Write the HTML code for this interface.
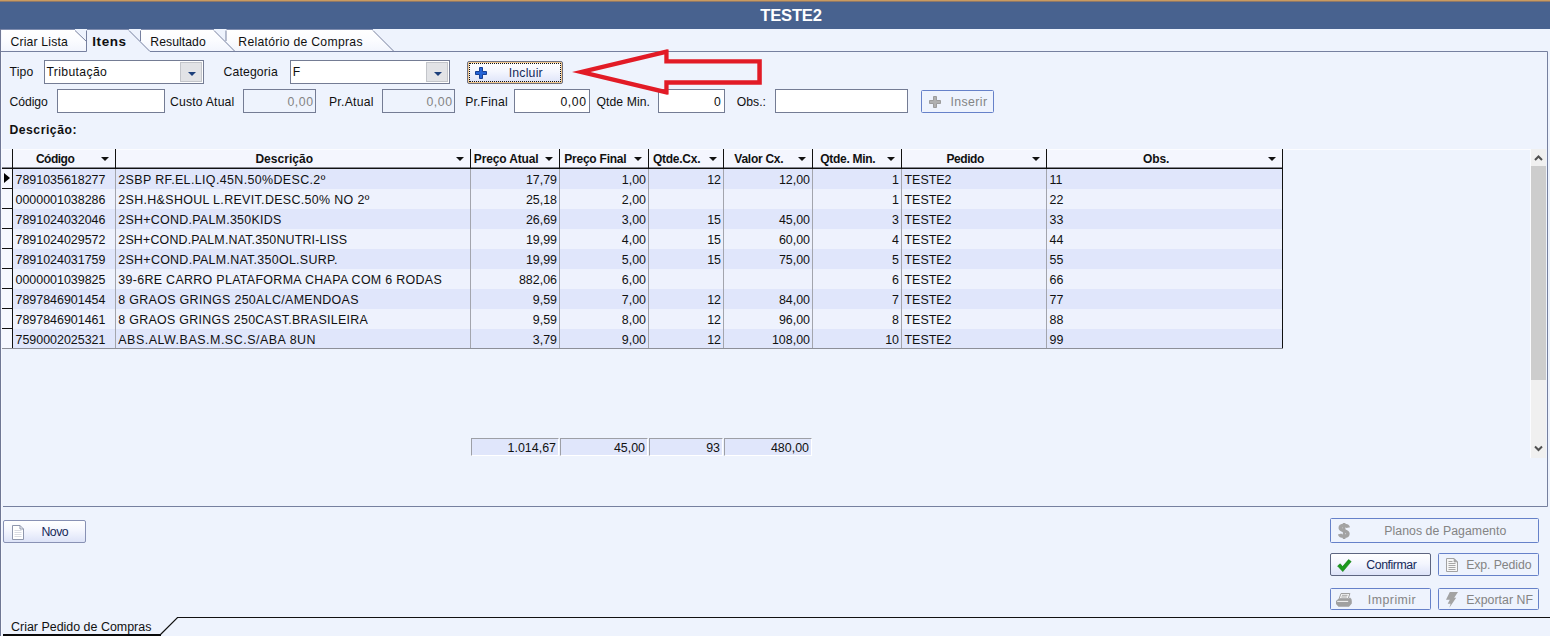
<!DOCTYPE html>
<html><head><meta charset="utf-8">
<style>
*{box-sizing:border-box;margin:0;padding:0}
html,body{width:1550px;height:636px;overflow:hidden;background:#eef3fd}
body{position:relative;font-family:"Liberation Sans",sans-serif;font-size:13px;color:#111}
.a{position:absolute}
.lbl{position:absolute;font-size:12.2px;line-height:16px;white-space:nowrap;color:#101010}
.bl{position:absolute;font-size:12.3px;line-height:16px;white-space:nowrap;color:#15295a}
.bg{position:absolute;font-size:12.3px;line-height:16px;white-space:nowrap;color:#848484}
.inp{position:absolute;background:#fff;border:1px solid #747c94}
.inp.dis{background:#eef3fd}
.cb{position:absolute;background:#fff;border:1px solid #747c94}
.cb i{position:absolute;right:1px;top:1px;width:22px;height:20px;background:#e2e3e6;border:1px solid #c3c5ca}
.cb i:after{content:"";position:absolute;left:6.5px;top:8.5px;border:4.2px solid transparent;border-top:4.6px solid #1c3f7a;border-bottom:0}
.btn{position:absolute;border:1px solid #8891b4;border-radius:2px;background:linear-gradient(#ffffff 0%,#f4f6fe 45%,#dde3f8 100%)}
.btn.dis{border-color:#6681c9;border-radius:1.5px;background:#eef3fd}
.hd{position:absolute;font-weight:bold;font-size:12px;line-height:16px;color:#111;white-space:nowrap}
.vl{position:absolute;top:149px;width:1px;height:19px;background:#111}
.ar{position:absolute;top:156.7px;width:0;height:0;border:4.2px solid transparent;border-top:4.5px solid #111;border-bottom:0}
.row{position:absolute;left:13px;width:1269px;height:20px}
.row.d{background:#e0e6fb}
.row.l{background:#eef2fd}
.c{position:absolute;font-size:12.45px;line-height:16px;white-space:nowrap;color:#111}
.gl{position:absolute;top:169px;width:1px;height:179px;background:#a3a5ad}
.ft{position:absolute;top:438px;height:18px;background:#e0e6fb;border-top:1px solid #9d9fa6;border-left:1px solid #9d9fa6;border-right:1px solid #fff;border-bottom:1px solid #fff}
</style></head><body>
<div class="a" style="left:0;top:0;width:1550px;height:1px;background:#c99a60"></div>
<div class="a" style="left:0;top:2px;width:1550px;height:27px;background:#48628f"></div>
<div class="a" style="left:0;top:1px;width:1550px;height:1px;background:#8f7868"></div>
<div id="title" class="lbl" style="left:760.2px;top:6px;letter-spacing:-0.184px;color:#fff;font-weight:bold;font-size:16.6px;line-height:20px">TESTE2</div>
<svg class="a" style="left:0;top:0" width="1550" height="636" viewBox="0 0 1550 636">
  <defs><linearGradient id="tg" x1="0" y1="0" x2="0" y2="1"><stop offset="0" stop-color="#ffffff"/><stop offset="0.5" stop-color="#fbfcff"/><stop offset="1" stop-color="#f2f5fd"/></linearGradient></defs>
  <polygon points="2,30 75,30 86.5,41 86.5,51 2,51" fill="url(#tg)"/>
  <polygon points="140.5,30 214,30 235,51.5 150,51.5 140.5,41" fill="url(#tg)"/>
  <polygon points="226,30 373,30 394,51.5 235,51.5 226,41" fill="url(#tg)"/>
  <rect x="0" y="29" width="1" height="607" fill="#6f7794"/>
  <rect x="1" y="29" width="1" height="607" fill="#f6f8ff"/>
  <g fill="none" stroke="#76809f" stroke-width="1">
    <path d="M1,51.5 H86.5"/>
    <path d="M150,51.5 H1547.5 V506.5 H3"/>
    <path d="M75,30.5 L86.5,41.5"/>
    <path d="M86.5,30.5 V51.5"/>
    <path d="M129,30.5 L150,51.5"/>
    <path d="M140.5,41 V30.5"/><path d="M214,30.5 L235,51.5"/>
    <path d="M226,41 V30.5"/><path d="M373,30.5 L394,51.5"/>
  </g>
  <path d="M1,29.5 H75 M87,29.5 H129 M141,29.5 H214 M226.5,29.5 H373" stroke="#7f8cae" stroke-width="1" fill="none"/>
  <path d="M1550,617.5 H177.5 L160,635" fill="none" stroke="#111" stroke-width="1.2"/>
  <rect x="3" y="634" width="158" height="2" fill="#0a0a0a"/>
</svg>
<div id="tb1" class="lbl" style="left:10.5px;top:34px;letter-spacing:0.175px;">Criar Lista</div>
<div id="tb2" class="lbl" style="left:92.3px;top:34px;letter-spacing:0.546px;font-weight:bold;font-size:13.5px">Itens</div>
<div id="tb3" class="lbl" style="left:150.3px;top:34px;letter-spacing:0.064px;">Resultado</div>
<div id="tb4" class="lbl" style="left:238.3px;top:34px;letter-spacing:0.298px;">Relatório de Compras</div>
<div id="l1" class="lbl" style="left:9.6px;top:64px;letter-spacing:0.145px;">Tipo</div>
<div class="cb" style="left:44px;top:60px;width:160px;height:24px"><i></i></div>
<div id="v1" class="lbl" style="left:46.5px;top:64px;letter-spacing:0.351px;">Tributação</div>
<div id="l2" class="lbl" style="left:223.5px;top:64px;letter-spacing:0.168px;">Categoria</div>
<div class="cb" style="left:290px;top:60px;width:160px;height:24px"><i></i></div>
<div id="v2" class="lbl" style="left:292.8px;top:64px;letter-spacing:-0.9px;">F</div>
<div class="btn" style="left:467px;top:61px;width:96px;height:23px;border-color:#6e7182;box-shadow:inset 0 0 0 1px #f2c88e">
  <div class="a" style="left:1px;top:1px;right:1px;bottom:1px;border:1px dotted #111"></div>
  <svg class="a" style="left:7px;top:5px" width="12" height="12" viewBox="0 0 12 12"><path d="M4.5,0.5h3v4h4v3h-4v4h-3v-4h-4v-3h4z" fill="#2463d6" stroke="#163f94" stroke-width="1"/></svg>
</div>
<div id="b1" class="bl" style="left:508.7px;top:64.5px;letter-spacing:0.198px;">Incluir</div>
<div id="l3" class="lbl" style="left:9.6px;top:93.5px;letter-spacing:-0.105px;">Código</div>
<div class="inp" style="left:57px;top:89px;width:108px;height:24px"></div>
<div id="l4" class="lbl" style="left:170px;top:93.5px;letter-spacing:0.196px;">Custo Atual</div>
<div class="inp dis" style="left:243px;top:89px;width:73px;height:24px"></div>
<div id="v3" class="bg" style="left:287.5px;top:93.5px;letter-spacing:0.521px;">0,00</div>
<div id="l5" class="lbl" style="left:329px;top:93.5px;letter-spacing:0.245px;">Pr.Atual</div>
<div class="inp dis" style="left:382px;top:89px;width:73px;height:24px"></div>
<div id="v4" class="bg" style="left:426.5px;top:93.5px;letter-spacing:0.521px;">0,00</div>
<div id="l6" class="lbl" style="left:465.3px;top:93.5px;letter-spacing:0.139px;">Pr.Final</div>
<div class="inp" style="left:514px;top:89px;width:76px;height:24px"></div>
<div id="v5" class="lbl" style="left:560.5px;top:93.5px;letter-spacing:0.589px;">0,00</div>
<div id="l7" class="lbl" style="left:596.4px;top:93.5px;letter-spacing:0.095px;">Qtde Min.</div>
<div class="inp" style="left:658px;top:89px;width:67px;height:24px"></div>
<div id="v6" class="lbl" style="left:714px;top:93.5px;letter-spacing:0.219px;">0</div>
<div id="l8" class="lbl" style="left:736.7px;top:93.5px;letter-spacing:0.044px;">Obs.:</div>
<div class="inp" style="left:775px;top:89px;width:133px;height:24px"></div>
<div class="btn dis" style="left:921px;top:90px;width:73px;height:23px">
  <svg class="a" style="left:7px;top:5px" width="12" height="12" viewBox="0 0 12 12"><path d="M4.5,0.5h3v4h4v3h-4v4h-3v-4h-4v-3h4z" fill="#b0b0b0" stroke="#9c9c9c" stroke-width="1"/></svg>
</div>
<div id="b2" class="bg" style="left:950.4px;top:93.5px;letter-spacing:0.405px;">Inserir</div>
<div id="l9" class="lbl" style="left:9.4px;top:122px;letter-spacing:0.53px;font-weight:bold">Descrição:</div>
<svg class="a" style="left:0;top:0" width="1550" height="636" viewBox="0 0 1550 636"><path fill-rule="evenodd" fill="#e21b26" d="M572,72 L667,49.2 L668.6,49.6 V59.2 H761.8 V84.7 H668.6 V94.4 L667,94.8 Z M590.5,72 L664.3,54.6 V63.4 H757.3 V80.2 H664.3 V89.4 Z"/></svg>
<div class="a" style="left:2px;top:149px;width:1529px;height:1px;background:#fbfcff"></div><div class="a" style="left:1530px;top:149px;width:1px;height:309px;background:#fbfcff"></div>
<div class="a" style="left:2px;top:150px;width:1281px;height:18px;background:#f4f6fe"></div>
<div class="a" style="left:2px;top:167px;width:1281px;height:1px;background:#85878f"></div><div class="a" style="left:2px;top:168px;width:1281px;height:1px;background:#111"></div>
<div class="a" style="left:1282px;top:149px;width:1px;height:200px;background:#111"></div>
<div class="vl" style="left:12px"></div>
<div class="vl" style="left:115px"></div>
<div class="vl" style="left:470px"></div>
<div class="vl" style="left:559px"></div>
<div class="vl" style="left:648px"></div>
<div class="vl" style="left:723px"></div>
<div class="vl" style="left:812px"></div>
<div class="vl" style="left:901px"></div>
<div class="vl" style="left:1046px"></div>
<div id="h0" class="hd" style="left:35.9px;top:150.5px;letter-spacing:-0.486px;">Código</div>
<div class="ar" style="left:101.3px"></div>
<div id="h1" class="hd" style="left:255.4px;top:150.5px;letter-spacing:0.041px;">Descrição</div>
<div class="ar" style="left:456.3px"></div>
<div id="h2" class="hd" style="left:473.8px;top:150.5px;letter-spacing:-0.145px;">Preço Atual</div>
<div class="ar" style="left:545.3px"></div>
<div id="h3" class="hd" style="left:564.3px;top:150.5px;letter-spacing:-0.239px;">Preço Final</div>
<div class="ar" style="left:634.3px"></div>
<div id="h4" class="hd" style="left:653px;top:150.5px;letter-spacing:-0.263px;">Qtde.Cx.</div>
<div class="ar" style="left:709.3px"></div>
<div id="h5" class="hd" style="left:734.3px;top:150.5px;letter-spacing:-0.257px;">Valor Cx.</div>
<div class="ar" style="left:798.3px"></div>
<div id="h6" class="hd" style="left:820.3px;top:150.5px;letter-spacing:-0.289px;">Qtde. Min.</div>
<div class="ar" style="left:887.3px"></div>
<div id="h7" class="hd" style="left:946.4px;top:150.5px;letter-spacing:-0.423px;">Pedido</div>
<div class="ar" style="left:1032.3px"></div>
<div id="h8" class="hd" style="left:1142.9px;top:150.5px;letter-spacing:-0.057px;">Obs.</div>
<div class="ar" style="left:1268.3px"></div>
<div class="row d" style="top:169px"></div>
<div class="row l" style="top:189px"></div>
<div class="row d" style="top:209px"></div>
<div class="row l" style="top:229px"></div>
<div class="row d" style="top:249px"></div>
<div class="row l" style="top:269px"></div>
<div class="row d" style="top:289px"></div>
<div class="row l" style="top:309px"></div>
<div class="row d" style="top:329px"></div>
<div class="c" style="left:15.5px;top:172px">7891035618277</div>
<div id="d0" class="c" style="left:118.3px;top:172px;letter-spacing:0.371px;">2SBP RF.EL.LIQ.45N.50%DESC.2º</div>
<div class="c" style="left:471px;width:86px;top:172px;text-align:right">17,79</div>
<div class="c" style="left:560px;width:86px;top:172px;text-align:right">1,00</div>
<div class="c" style="left:649px;width:72px;top:172px;text-align:right">12</div>
<div class="c" style="left:724px;width:86px;top:172px;text-align:right">12,00</div>
<div class="c" style="left:813px;width:86px;top:172px;text-align:right">1</div>
<div class="c" style="left:904.5px;top:172px">TESTE2</div>
<div class="c" style="left:1049.5px;top:172px">11</div>
<div class="c" style="left:15.5px;top:192px">0000001038286</div>
<div id="d1" class="c" style="left:118.3px;top:192px;letter-spacing:0.337px;">2SH.H&amp;SHOUL L.REVIT.DESC.50% NO 2º</div>
<div class="c" style="left:471px;width:86px;top:192px;text-align:right">25,18</div>
<div class="c" style="left:560px;width:86px;top:192px;text-align:right">2,00</div>
<div class="c" style="left:813px;width:86px;top:192px;text-align:right">1</div>
<div class="c" style="left:904.5px;top:192px">TESTE2</div>
<div class="c" style="left:1049.5px;top:192px">22</div>
<div class="c" style="left:15.5px;top:212px">7891024032046</div>
<div id="d2" class="c" style="left:118.3px;top:212px;letter-spacing:0.264px;">2SH+COND.PALM.350KIDS</div>
<div class="c" style="left:471px;width:86px;top:212px;text-align:right">26,69</div>
<div class="c" style="left:560px;width:86px;top:212px;text-align:right">3,00</div>
<div class="c" style="left:649px;width:72px;top:212px;text-align:right">15</div>
<div class="c" style="left:724px;width:86px;top:212px;text-align:right">45,00</div>
<div class="c" style="left:813px;width:86px;top:212px;text-align:right">3</div>
<div class="c" style="left:904.5px;top:212px">TESTE2</div>
<div class="c" style="left:1049.5px;top:212px">33</div>
<div class="c" style="left:15.5px;top:232px">7891024029572</div>
<div id="d3" class="c" style="left:118.3px;top:232px;letter-spacing:0.162px;">2SH+COND.PALM.NAT.350NUTRI-LISS</div>
<div class="c" style="left:471px;width:86px;top:232px;text-align:right">19,99</div>
<div class="c" style="left:560px;width:86px;top:232px;text-align:right">4,00</div>
<div class="c" style="left:649px;width:72px;top:232px;text-align:right">15</div>
<div class="c" style="left:724px;width:86px;top:232px;text-align:right">60,00</div>
<div class="c" style="left:813px;width:86px;top:232px;text-align:right">4</div>
<div class="c" style="left:904.5px;top:232px">TESTE2</div>
<div class="c" style="left:1049.5px;top:232px">44</div>
<div class="c" style="left:15.5px;top:252px">7891024031759</div>
<div id="d4" class="c" style="left:118.3px;top:252px;letter-spacing:0.283px;">2SH+COND.PALM.NAT.350OL.SURP.</div>
<div class="c" style="left:471px;width:86px;top:252px;text-align:right">19,99</div>
<div class="c" style="left:560px;width:86px;top:252px;text-align:right">5,00</div>
<div class="c" style="left:649px;width:72px;top:252px;text-align:right">15</div>
<div class="c" style="left:724px;width:86px;top:252px;text-align:right">75,00</div>
<div class="c" style="left:813px;width:86px;top:252px;text-align:right">5</div>
<div class="c" style="left:904.5px;top:252px">TESTE2</div>
<div class="c" style="left:1049.5px;top:252px">55</div>
<div class="c" style="left:15.5px;top:272px">0000001039825</div>
<div id="d5" class="c" style="left:118.3px;top:272px;letter-spacing:0.312px;">39-6RE CARRO PLATAFORMA CHAPA COM 6 RODAS</div>
<div class="c" style="left:471px;width:86px;top:272px;text-align:right">882,06</div>
<div class="c" style="left:560px;width:86px;top:272px;text-align:right">6,00</div>
<div class="c" style="left:813px;width:86px;top:272px;text-align:right">6</div>
<div class="c" style="left:904.5px;top:272px">TESTE2</div>
<div class="c" style="left:1049.5px;top:272px">66</div>
<div class="c" style="left:15.5px;top:292px">7897846901454</div>
<div id="d6" class="c" style="left:118.3px;top:292px;letter-spacing:0.322px;">8 GRAOS GRINGS 250ALC/AMENDOAS</div>
<div class="c" style="left:471px;width:86px;top:292px;text-align:right">9,59</div>
<div class="c" style="left:560px;width:86px;top:292px;text-align:right">7,00</div>
<div class="c" style="left:649px;width:72px;top:292px;text-align:right">12</div>
<div class="c" style="left:724px;width:86px;top:292px;text-align:right">84,00</div>
<div class="c" style="left:813px;width:86px;top:292px;text-align:right">7</div>
<div class="c" style="left:904.5px;top:292px">TESTE2</div>
<div class="c" style="left:1049.5px;top:292px">77</div>
<div class="c" style="left:15.5px;top:312px">7897846901461</div>
<div id="d7" class="c" style="left:118.3px;top:312px;letter-spacing:0.28px;">8 GRAOS GRINGS 250CAST.BRASILEIRA</div>
<div class="c" style="left:471px;width:86px;top:312px;text-align:right">9,59</div>
<div class="c" style="left:560px;width:86px;top:312px;text-align:right">8,00</div>
<div class="c" style="left:649px;width:72px;top:312px;text-align:right">12</div>
<div class="c" style="left:724px;width:86px;top:312px;text-align:right">96,00</div>
<div class="c" style="left:813px;width:86px;top:312px;text-align:right">8</div>
<div class="c" style="left:904.5px;top:312px">TESTE2</div>
<div class="c" style="left:1049.5px;top:312px">88</div>
<div class="c" style="left:15.5px;top:332px">7590002025321</div>
<div id="d8" class="c" style="left:118.3px;top:332px;letter-spacing:0.519px;">ABS.ALW.BAS.M.SC.S/ABA 8UN</div>
<div class="c" style="left:471px;width:86px;top:332px;text-align:right">3,79</div>
<div class="c" style="left:560px;width:86px;top:332px;text-align:right">9,00</div>
<div class="c" style="left:649px;width:72px;top:332px;text-align:right">12</div>
<div class="c" style="left:724px;width:86px;top:332px;text-align:right">108,00</div>
<div class="c" style="left:813px;width:86px;top:332px;text-align:right">10</div>
<div class="c" style="left:904.5px;top:332px">TESTE2</div>
<div class="c" style="left:1049.5px;top:332px">99</div>
<div class="a" style="left:2px;top:169px;width:10px;height:179px;background:#f6f8ff"></div>
<div class="a" style="left:2px;top:188px;width:10px;height:1px;background:#111"></div>
<div class="a" style="left:2px;top:208px;width:10px;height:1px;background:#111"></div>
<div class="a" style="left:2px;top:228px;width:10px;height:1px;background:#111"></div>
<div class="a" style="left:2px;top:248px;width:10px;height:1px;background:#111"></div>
<div class="a" style="left:2px;top:268px;width:10px;height:1px;background:#111"></div>
<div class="a" style="left:2px;top:288px;width:10px;height:1px;background:#111"></div>
<div class="a" style="left:2px;top:308px;width:10px;height:1px;background:#111"></div>
<div class="a" style="left:2px;top:328px;width:10px;height:1px;background:#111"></div>
<div class="a" style="left:12px;top:169px;width:1px;height:180px;background:#111"></div>
<div class="a" style="left:4px;top:173px;width:0;height:0;border:5.7px solid transparent;border-left:6.3px solid #000;border-right:0"></div>
<div class="gl" style="left:115px"></div>
<div class="gl" style="left:470px"></div>
<div class="gl" style="left:559px"></div>
<div class="gl" style="left:648px"></div>
<div class="gl" style="left:723px"></div>
<div class="gl" style="left:812px"></div>
<div class="gl" style="left:901px"></div>
<div class="gl" style="left:1046px"></div>
<div class="a" style="left:2px;top:348px;width:1281px;height:1px;background:#8d8f98"></div>
<div class="ft" style="left:471px;width:88px"></div>
<div class="c" style="left:471px;width:85px;top:440px;text-align:right">1.014,67</div>
<div class="ft" style="left:560px;width:88px"></div>
<div class="c" style="left:560px;width:85px;top:440px;text-align:right">45,00</div>
<div class="ft" style="left:649px;width:74px"></div>
<div class="c" style="left:649px;width:71px;top:440px;text-align:right">93</div>
<div class="ft" style="left:724px;width:88px"></div>
<div class="c" style="left:724px;width:85px;top:440px;text-align:right">480,00</div>
<div class="a" style="left:1531px;top:149px;width:15px;height:309px;background:#f0f0f0"></div>
<div class="a" style="left:1531px;top:166px;width:15px;height:214px;background:#cdcdcd"></div>
<svg class="a" style="left:1531px;top:149px" width="15" height="309" viewBox="0 0 15 309"><path d="M4,11 L7.5,7.5 L11,11" fill="none" stroke="#505050" stroke-width="2"/><path d="M4,297.5 L7.5,301 L11,297.5" fill="none" stroke="#505050" stroke-width="2"/></svg>
<div class="btn" style="left:3px;top:520px;width:83px;height:23px">
  <svg class="a" style="left:8px;top:4px" width="12" height="15" viewBox="0 0 12 15"><path d="M0.5,0.5 H8 L11.5,4 V14.5 H0.5 Z" fill="#fff" stroke="#8f97ad"/><path d="M8,0.5 V4 H11.5" fill="none" stroke="#8f97ad"/><path d="M2.5,5.5H9.5M2.5,7.500H9.5M2.5,9.5H9.5M2.5,11.5H9.5" stroke="#d9dbe2"/></svg>
</div>
<div id="b3" class="bl" style="left:41.5px;top:524px;letter-spacing:-0.506px;">Novo</div>
<div class="btn dis" style="left:1330px;top:518px;width:209px;height:25px">
  <svg class="a" style="left:6px;top:3px" width="14" height="18" viewBox="0 0 14 18"><path d="M11.3,5.6 C10.6,2.9 3.3,2.7 3.3,5.9 C3.3,9 10.9,8.200 10.900,11.700 C10.900,15.100 3.400,14.900 2.600,12" fill="none" stroke="#a3a3a3" stroke-width="3.600"/><path d="M7.1,1 V17" stroke="#a3a3a3" stroke-width="2.600"/></svg>
</div>
<div id="b4" class="bg" style="left:1384.2px;top:523px;letter-spacing:0.06px;">Planos de Pagamento</div>
<div class="btn" style="left:1330px;top:553px;width:101px;height:23px;border-color:#5d6580">
  <svg class="a" style="left:6px;top:5px" width="16" height="13" viewBox="0 0 16 13"><path d="M0.6,7 L3.2,4.8 L5.6,7.6 L11.6,0.6 L14.2,2.6 L5.8,12.6 Z" fill="#1c9a1c" stroke="#0e7a10" stroke-width="0.6"/></svg>
</div>
<div id="b5" class="bl" style="left:1366.3px;top:557px;letter-spacing:-0.436px;">Confirmar</div>
<div class="btn dis" style="left:1438px;top:553px;width:101px;height:23px">
  <svg class="a" style="left:7px;top:4px" width="12" height="14" viewBox="0 0 12 14"><path d="M0.5,0.5 H8 L11.5,4 V13.5 H0.5 Z" fill="#f6f6f6" stroke="#a2a2a2"/><path d="M8,0.5 V4 H11.5 Z" fill="#a8a8a8" stroke="#a2a2a2" stroke-width=".6"/><path d="M2.5,3.500H6.500M2.5,5.500H9.500M2.5,7.500H9.500M2.5,9.500H9.500M2.500,11.500H9.500" stroke="#a6a6a6"/></svg>
</div>
<div id="b6" class="bg" style="left:1466.2px;top:557px;letter-spacing:-0.091px;">Exp. Pedido</div>
<div class="btn dis" style="left:1330px;top:588px;width:101px;height:22px">
  <svg class="a" style="left:5px;top:4px" width="16" height="15" viewBox="0 0 16 15"><path d="M2.500,5.800 H12.500 L14,4.500 Q16,5.500 15.800,8 V10.500 L13,13.800 H2.500 L0,11 V8 Z" fill="#a0a0a0"/><path d="M5,0.500 H13.900 L12.200,5.700 H3.100 Z" fill="#f4f4f4" stroke="#a0a0a0"/><path d="M6,2.300 H11.500 M5.300,4 H10.800" stroke="#a8a8a8" stroke-width="1"/><path d="M1.200,8.400 H12.200" stroke="#f4f4f4" stroke-width="1"/></svg>
</div>
<div id="b7" class="bg" style="left:1367.8px;top:591.5px;letter-spacing:0.499px;">Imprimir</div>
<div class="btn dis" style="left:1438px;top:588px;width:101px;height:22px">
  <svg class="a" style="left:7px;top:3px" width="13" height="17" viewBox="0 0 13 17"><path d="M3.800,0 H12 L8.200,5.800 H10.200 L3.300,15.800 L4.600,11.800 H1.700 L3.800,7.700 H0 Z" fill="#a3a3a3"/></svg>
</div>
<div id="b8" class="bg" style="left:1466.2px;top:591.5px;letter-spacing:0.05px;">Exportar NF</div>
<div id="bt" class="c" style="left:11px;top:618.5px;letter-spacing:0.003px;">Criar Pedido de Compras</div>
</body></html>
